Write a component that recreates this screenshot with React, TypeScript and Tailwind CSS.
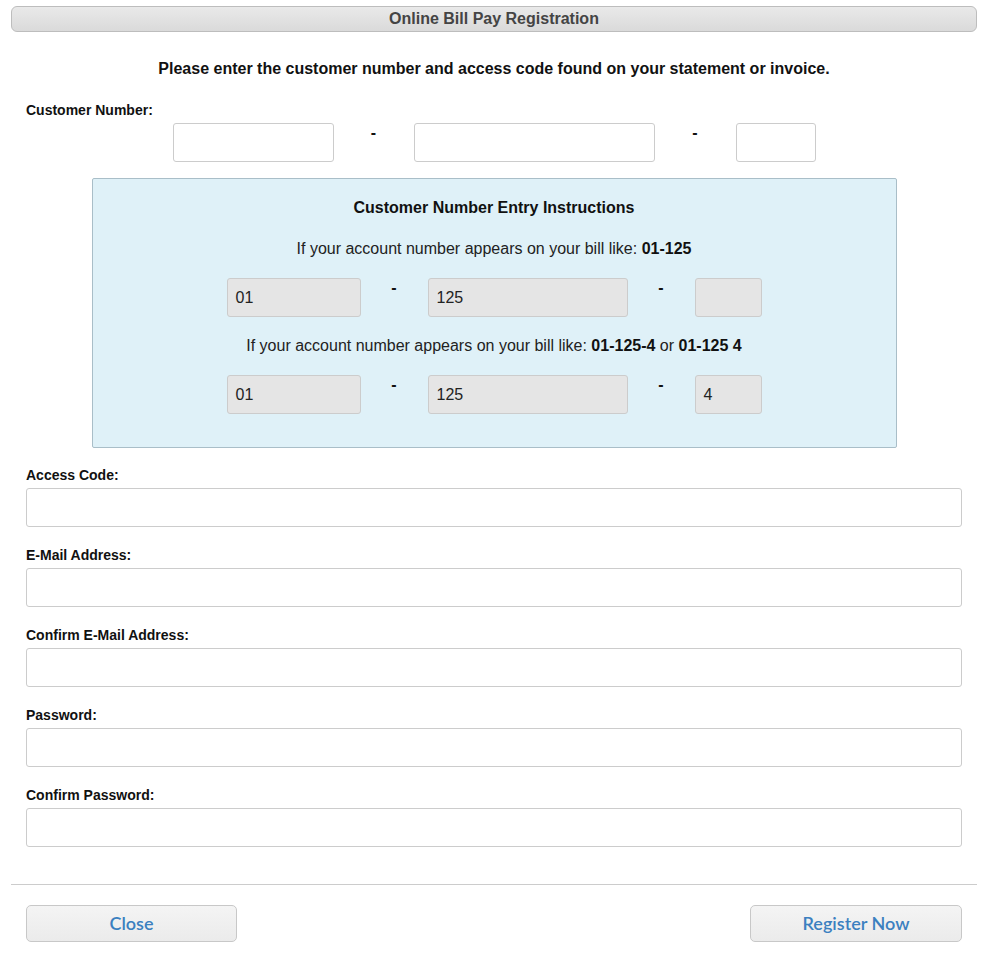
import React from 'react';

const Dash: React.FC<{ w: string }> = ({ w }) => (
  <div className={`${w} flex justify-center text-[16px] font-bold leading-[18px] pt-[1px]`}>-</div>
);

const SampleBox: React.FC<{ w: string; value?: string }> = ({ w, value }) => (
  <div
    className={`${w} h-[39px] rounded-[3px] border border-[#cccccc] bg-[#e5e5e5] pl-[8px] flex items-center text-[16px] text-[#222]`}
  >
    {value}
  </div>
);

const Field: React.FC<{ label: string; type?: string }> = ({ label, type = 'text' }) => (
  <div className="mt-[20px] first-of-type:mt-[19px]">
    <label className="block text-[14px] font-bold leading-[17px] text-[#111]">{label}</label>
    <input
      type={type}
      className="mt-[4px] block w-full h-[39px] rounded-[3px] border border-[#cccccc] bg-white px-2 text-[14px] outline-none"
    />
  </div>
);

const App: React.FC = () => {
  return (
    <div className="min-h-screen bg-white pl-[11px] pr-[10px] pt-[6px] pb-[16px] font-['Liberation_Sans',Arial,sans-serif] text-[#111]">
      <div className="h-[26px] rounded-[6px] border border-[#bdbdbd] bg-gradient-to-b from-[#e9e9e9] to-[#dadada] flex items-center justify-center text-[16px] font-bold text-[#444]">
        Online Bill Pay Registration
      </div>

      <p className="mt-[28px] text-center text-[16px] font-bold leading-[18px]">
        Please enter the customer number and access code found on your statement or invoice.
      </p>

      <div className="px-[15px]">
        <div className="mt-[24px] text-[14px] font-bold leading-[16px]">Customer Number:</div>
        <div className="mt-[5px] flex justify-center items-start">
          <input className="w-[161px] h-[39px] rounded-[3px] border border-[#cccccc] bg-white px-2 outline-none" />
          <Dash w="w-[80px]" />
          <input className="w-[241px] h-[39px] rounded-[3px] border border-[#cccccc] bg-white px-2 outline-none" />
          <Dash w="w-[81px]" />
          <input className="w-[80px] h-[39px] rounded-[3px] border border-[#cccccc] bg-white px-2 outline-none" />
        </div>

        <div className="mx-auto mt-[16px] w-[805px] rounded-[2px] border border-[#a9bec8] bg-[#dff1f8] pt-[20px] pb-[33px] text-center">
          <h3 className="text-[16px] font-bold leading-[18px]">Customer Number Entry Instructions</h3>
          <p className="mt-[23px] text-[16px] leading-[18px] text-[#222]">
            If your account number appears on your bill like: <b className="text-[#111]">01-125</b>
          </p>
          <div className="mt-[20px] flex justify-center items-start">
            <SampleBox w="w-[134px]" value="01" />
            <Dash w="w-[67px]" />
            <SampleBox w="w-[200px]" value="125" />
            <Dash w="w-[67px]" />
            <SampleBox w="w-[67px]" />
          </div>
          <p className="mt-[20px] text-[16px] leading-[18px] text-[#222]">
            If your account number appears on your bill like: <b className="text-[#111]">01-125-4</b> or{' '}
            <b className="text-[#111]">01-125 4</b>
          </p>
          <div className="mt-[20px] flex justify-center items-start">
            <SampleBox w="w-[134px]" value="01" />
            <Dash w="w-[67px]" />
            <SampleBox w="w-[200px]" value="125" />
            <Dash w="w-[67px]" />
            <SampleBox w="w-[67px]" value="4" />
          </div>
        </div>

        <div>
          <Field label="Access Code:" />
          <Field label="E-Mail Address:" />
          <Field label="Confirm E-Mail Address:" />
          <Field label="Password:" type="password" />
          <Field label="Confirm Password:" type="password" />
        </div>
      </div>

      <div className="mt-[37px] border-t border-[#cccccc]" />

      <div className="mt-[20px] px-[15px] flex justify-between">
        <button className="w-[211px] h-[37px] rounded-[5px] border border-[#c8c8c8] bg-gradient-to-b from-[#f4f4f4] to-[#ebebeb] text-[18px] font-semibold text-[#3b80c0] font-['Lato','Open_Sans',sans-serif]">
          Close
        </button>
        <button className="w-[212px] h-[37px] rounded-[5px] border border-[#c8c8c8] bg-gradient-to-b from-[#f4f4f4] to-[#ebebeb] text-[18px] font-semibold text-[#3b80c0] font-['Lato','Open_Sans',sans-serif]">
          Register Now
        </button>
      </div>
    </div>
  );
};

export default App;
